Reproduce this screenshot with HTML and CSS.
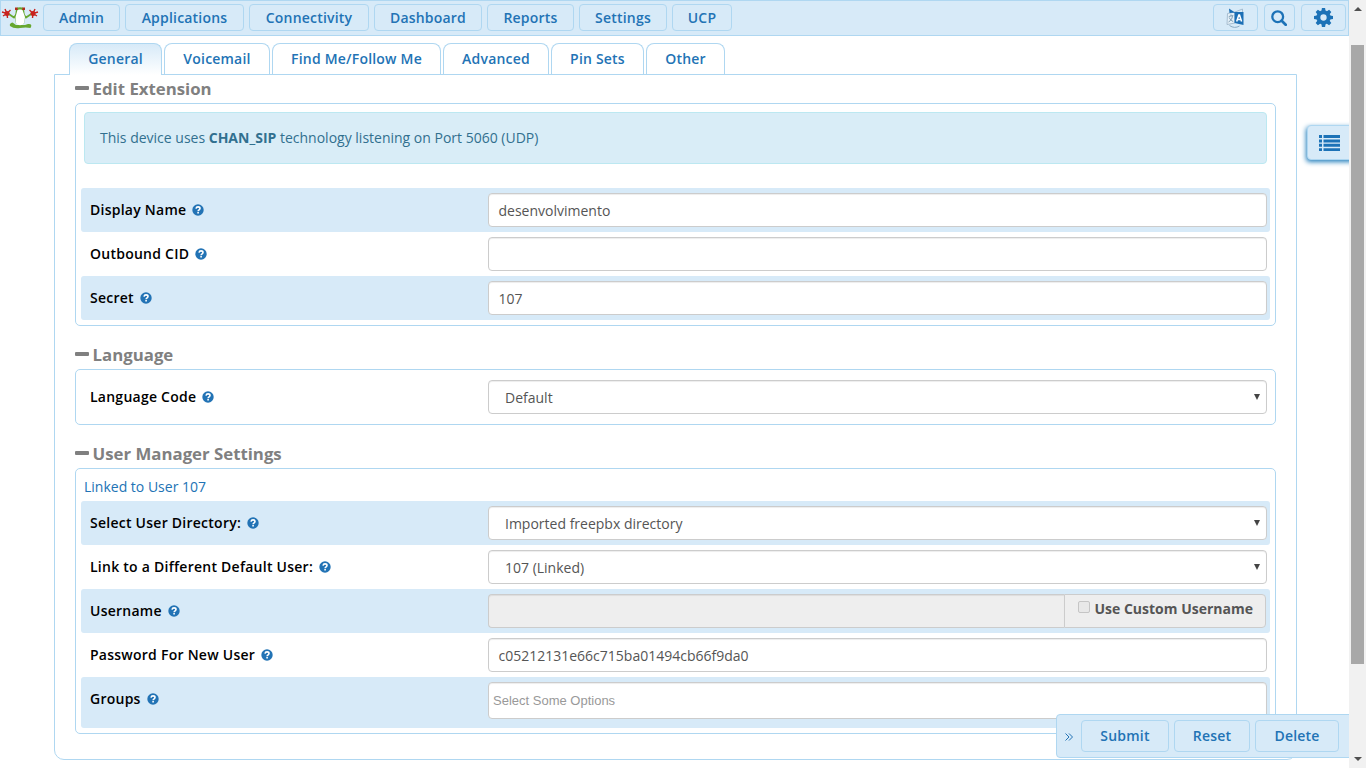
FILE: index.html
```html
<!DOCTYPE html>
<html lang="en">
<head>
<meta charset="utf-8">
<title>Extension</title>
<link rel="stylesheet" href="styles.css">
</head>
<body>
<svg class="defs" width="0" height="0" aria-hidden="true">
  <symbol id="help" viewBox="0 0 12 12"><circle cx="6" cy="6" r="5.7" fill="#2273b5"/><path d="M4 4.600C4.300 3.200 5 2.900 6 2.900c1.200 0 2 .7 2 1.600C8 5.900 6.100 5.700 6.100 7.300" fill="none" stroke="#fff" stroke-width="1.600"/><path d="M5.300 8h1.600v1.500H5.300z" fill="#fff"/></symbol>
</svg>
<div class="window">
  <div class="page">
    <header class="navbar">
      <svg class="logo" width="38" height="28" viewBox="1 4 38 28">
        <path d="M8 13.500l6 4 3-4M32 13.500l-6 4-3-4" fill="none" stroke="#67a72f" stroke-width="1.700"/>
        <path d="M15 17l1-8q4-3 8 0l1 8-1 7h-8z" fill="#67a72f"/>
        <path d="M12.500 22.500q-3.500 1-2.500 3.500 4 3 10 2t10.500 0q2.500-4.500-2.500-4L25 25H16z" fill="#67a72f"/>
        <path d="M17.500 10q2.500-2 5 0l2.500 7-1 6.500q-4 3.500-8 0L15.500 17z" fill="#fff"/>
        <path d="M15 7.500h3V10h-3zM22 7.500h3V10h-3z" fill="#b22a1c"/><path d="M17.500 7.500h5v2h-5z" fill="#67a72f"/>
        <g fill="none" stroke="#c8221d" stroke-width="1.400"><path d="M2 12l5 1.500L5 9m2 4.500l3.500-3.500M7 13.500L3 16m4-2.500l.5 4.500"/><path d="M38 12l-5 1.500L35 9m-2 4.500L29.500 10m3.500 3.500l4 2.500m-4-2.500l-.5 4.500"/></g>
        <circle cx="7" cy="13.500" r="2.500" fill="#c8221d"/><circle cx="33" cy="13.500" r="2.500" fill="#c8221d"/>
      </svg>
      <nav class="menu">
        <a class="btn w-admin">Admin</a><a class="btn w-apps">Applications</a><a class="btn w-conn">Connectivity</a><a class="btn w-dash">Dashboard</a><a class="btn w-rep">Reports</a><a class="btn w-set">Settings</a><a class="btn w-ucp">UCP</a>
      </nav>
      <div class="tools">
        <a class="btn w-icon"><svg class="nudge" width="18" height="20" viewBox="0 0 18 20"><path d="M1.500 5.500L9 4v11l-8 1.500z" fill="#e5f0f8" stroke="#9ab3c6" stroke-width=".8"/><path d="M9 4l7.500-3v3" fill="none" stroke="#9ab3c6" stroke-width=".8"/><path d="M3 .5L9 4.500 3.500 5zM8.500 4L17.500 4v13L8.500 15z" fill="#1c6fb5"/><path d="M2.800 8.500l4.500-1M5 6.500V8m1.500 0c-.5 3-1.500 4.500-4 6M3.200 9.500c1 2 2 3.200 4 4" fill="none" stroke="#7595ad" stroke-width=".9"/><path d="M10.700 13.500l2.100-6.500h.7l2.100 6.500M11.500 11.500h3.300" fill="none" stroke="#fff" stroke-width="1.500"/><path d="M3.500 17.500q5 3.500 10 .5" fill="none" stroke="#8aa9c2"/></svg></a>
        <a class="btn w-search"><svg class="nudge" width="16" height="16" viewBox="0 0 16 16" fill="none" stroke="#1c72b7"><circle cx="6.700" cy="6.700" r="5.400" stroke-width="2.300"/><path d="M10.700 10.700l4 4" stroke-width="2.700" stroke-linecap="round"/></svg></a>
        <a class="btn w-icon"><svg width="19" height="19" viewBox="-9 -9 18 18"><g fill="#1c72b7"><path d="M-2-6l.5-3h3l.5 3zM-2 6l.5 3h3l.5-3z"/><path d="M-2-6l.5-3h3l.5 3zM-2 6l.5 3h3l.5-3z" transform="rotate(45)"/><path d="M-2-6l.5-3h3l.5 3zM-2 6l.5 3h3l.5-3z" transform="rotate(90)"/><path d="M-2-6l.5-3h3l.5 3zM-2 6l.5 3h3l.5-3z" transform="rotate(135)"/></g><circle r="4.900" fill="none" stroke="#1c72b7" stroke-width="3.800"/></svg></a>
      </div>
    </header>
    <div class="tabs">
      <a class="tab active t1">General</a><a class="tab t2">Voicemail</a><a class="tab t3">Find Me/Follow Me</a><a class="tab t4">Advanced</a><a class="tab t5">Pin Sets</a><a class="tab t6">Other</a>
    </div>
    <main class="panel">
      <h3 class="title"><i class="minus"></i>Edit Extension</h3>
      <section class="box">
        <div class="alert">This device uses <b>CHAN_SIP</b> technology listening on Port 5060 (UDP)</div>
        <div class="row shade"><label class="label">Display Name<svg class="help"><use href="#help"/></svg></label><div class="field">desenvolvimento</div></div>
        <div class="row"><label class="label">Outbound CID<svg class="help"><use href="#help"/></svg></label><div class="field"></div></div>
        <div class="row shade"><label class="label">Secret<svg class="help"><use href="#help"/></svg></label><div class="field">107</div></div>
      </section>
      <h3 class="title"><i class="minus"></i>Language</h3>
      <section class="box">
        <div class="row"><label class="label">Language Code<svg class="help"><use href="#help"/></svg></label><div class="field select">Default<i class="caret"></i></div></div>
      </section>
      <h3 class="title"><i class="minus"></i>User Manager Settings</h3>
      <section class="box">
        <div class="linked">Linked to User 107</div>
        <div class="row shade"><label class="label">Select User Directory:<svg class="help"><use href="#help"/></svg></label><div class="field select">Imported freepbx directory<i class="caret"></i></div></div>
        <div class="row"><label class="label">Link to a Different Default User:<svg class="help"><use href="#help"/></svg></label><div class="field select">107 (Linked)<i class="caret"></i></div></div>
        <div class="row shade"><label class="label">Username<svg class="help"><use href="#help"/></svg></label><div class="group"><div class="field disabled"></div><div class="addon"><i class="check"></i>Use Custom Username</div></div></div>
        <div class="row"><label class="label">Password For New User<svg class="help"><use href="#help"/></svg></label><div class="field">c05212131e66c715ba01494cb66f9da0</div></div>
        <div class="row shade tall"><label class="label">Groups<svg class="help"><use href="#help"/></svg></label><div class="field chosen">Select Some Options</div></div>
      </section>
    </main>
    <aside class="drawer"><svg width="21" height="16" viewBox="0 0 21 16" fill="#1c72b7"><path d="M0 0h3v3H0zM4.500 0H21v3H4.500zM0 4.400h3v3H0zM4.500 4.400H21v3H4.500zM0 8.800h3v3H0zM4.500 8.800H21v3H4.500zM0 13.200h3V16H0zM4.500 13.200H21V16H4.500z"/></svg></aside>
    <footer class="actions"><span class="chev"><svg width="8" height="8" viewBox="0 0 8 8" fill="none" stroke="#2273b5"><path d="M.5.5L4 4 .5 7.500M4 .5L7.500 4 4 7.500"/></svg></span><a class="btn w-submit">Submit</a><a class="btn w-reset">Reset</a><a class="btn w-delete">Delete</a></footer>
  </div>
  <div class="scrollbar"><i class="up"></i><div class="thumb"></div><i class="down"></i></div>
</div>
</body>
</html>
```
FILE: styles.css
```css
* { box-sizing: border-box; }
body { margin: 0; overflow: hidden; background: #fff; font: 14px/20px "Open Sans", "Noto Sans", sans-serif; color: #555; }
.defs { position: absolute; }
.window { display: flex; width: 1366px; height: 768px; }
.page { position: relative; width: 1349px; height: 768px; overflow: hidden; }
.navbar { display: flex; align-items: flex-start; height: 36px; padding: 3px 2px 0 0; border: 1px solid #afd7f1; background: #d7eaf8; }
.logo { width: 38px; margin: 0 4px 0 0; }
.menu { display: flex; gap: 5px; }
.tools { display: flex; gap: 6px; margin-left: auto; }
.btn { display: flex; align-items: center; justify-content: center; height: 27px; border: 1px solid #afd7f1; border-radius: 4px; color: #2273b5; font-weight: 600; letter-spacing: .2px; background: #d7eaf8; }
.nudge { margin-right: 1px; }
.w-admin { width: 77px; }
.w-apps { width: 119px; }
.w-conn { width: 120px; }
.w-dash { width: 108px; }
.w-rep { width: 87px; }
.w-set { width: 88px; }
.w-ucp { width: 60px; }
.w-icon { width: 45px; }
.w-search { width: 31px; }
.tabs { display: flex; gap: 2px; padding: 7px 0 0 69px; }
.tab { height: 31px; border: 1px solid #afd7f1; border-bottom: 0; border-radius: 8px 8px 0 0; line-height: 30px; text-align: center; color: #2273b5; font-weight: 600; letter-spacing: .2px; }
.active { height: 32px; margin-bottom: -1px; background: linear-gradient(#d7eaf8, #fff); z-index: 1; }
.t1 { width: 93px; }
.t2 { width: 106px; }
.t3 { width: 169px; }
.t4 { width: 106px; }
.t5 { width: 93px; }
.t6 { width: 79px; }
.panel { width: 1243px; height: 686px; margin-left: 54px; padding: 4px 20px 0; border: 1px solid #afd7f1; border-radius: 0 0 10px 10px; }
.title { display: flex; align-items: center; gap: 3.6px; height: 20px; margin: 0 0 4px; color: #808080; font-size: 16.8px; line-height: 20px; font-weight: 700; }
.minus { width: 14px; height: 4px; margin-top: -2px; border-radius: 1px; background: #808080; }
.box { width: 1201px; margin-bottom: 19px; padding: 5px; border: 1px solid #afd7f1; border-radius: 5px; }
.alert { height: 52px; margin: 3px 3px 24px; padding: 15px; border: 1px solid #bce8f1; border-radius: 4px; background: #d9edf7; color: #31708f; }
.alert b { font-weight: 700; }
.row { display: flex; align-items: flex-start; width: 1189px; height: 44px; padding: 5px 3px 0 9px; border-radius: 3px; }
.shade { background: #d7eaf8; }
.tall { height: 51px; }
.label { display: flex; align-items: center; gap: 6px; width: 398px; height: 34px; color: #000; font-weight: 600; letter-spacing: .25px; }
.help { width: 12px; height: 12px; }
.field { display: flex; align-items: center; width: 779px; height: 34px; padding: 2px 9.5px 0; border: 1px solid #ccc; border-radius: 4px; background: #fff; box-shadow: inset 0 1px 1px rgba(0,0,0,.075); }
.select { padding-left: 16px; padding-right: 5px; }
.caret { margin: -2px 1px 0 auto; border: 3px solid transparent; border-top: 6px solid #444; border-bottom: 0; }
.group { display: flex; width: 778px; }
.disabled { width: 576px; background: #eee; border-radius: 4px 0 0 4px; border-right: 0; }
.addon { display: flex; width: 202px; height: 34px; padding: 4px 0 0 13px; border: 1px solid #ccc; border-radius: 0 4px 4px 0; background: #eee; font-weight: 700; white-space: nowrap; }
.check { flex: none; width: 12px; height: 12px; margin: 2px 4.5px 0 0; border: 1px solid #c5c5c5; border-radius: 2px; background: #e8e8e8; }
.chosen { height: 37px; padding: 0 4px; font: 13px "Liberation Sans", Arial, sans-serif; color: #999; }
.linked { height: 27px; padding: 3px; color: #2273b5; }
.drawer { position: absolute; left: 1307px; top: 125px; width: 50px; height: 35px; padding: 9px 0 0 11px; border: 1px solid #afd7f1; border-radius: 4px; background: #d7eaf8; box-shadow: -1px 2px 5px #2580bd; }
.drawer svg { display: block; }
.actions { position: absolute; left: 1056px; top: 714px; display: flex; gap: 5px; width: 300px; height: 44px; padding: 5px 0 0 8px; border: 1px solid #afd7f1; border-radius: 4px; background: #d7eaf8; }
.actions .btn { height: 32px; }
.chev { display: flex; align-items: center; width: 11px; height: 34px; }
.w-submit { width: 88px; }
.w-reset { width: 76px; }
.w-delete { width: 84px; }
.scrollbar { display: flex; flex-direction: column; align-items: center; width: 17px; padding: 7px 0; background: #f1f1f1; }
.up, .down { border: 4px solid transparent; }
.up { border-top: 0; border-bottom-color: #505050; }
.down { margin-top: auto; border-bottom: 0; border-top-color: #505050; }
.thumb { width: 13px; height: 619px; margin-top: 34px; background: #a8a8a8; }
```
